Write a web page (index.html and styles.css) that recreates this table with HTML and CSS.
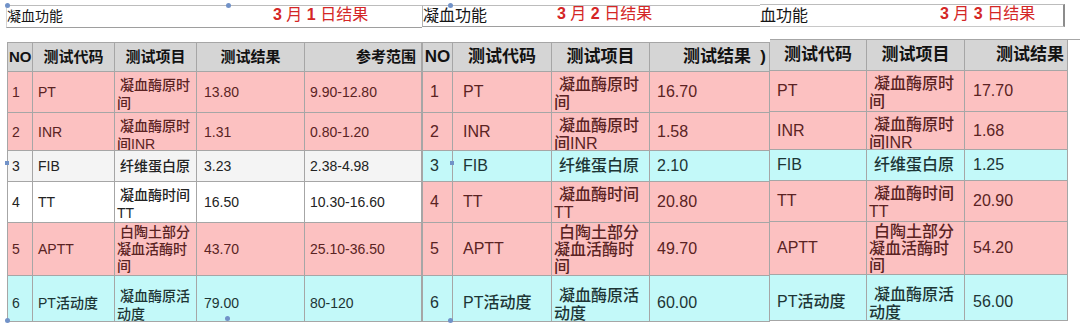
FILE: index.html
```html
<!DOCTYPE html>
<html lang="zh">
<head>
<meta charset="utf-8">
<title>凝血功能</title>
<link rel="stylesheet" href="styles.css">
</head>
<body>
<div class="sheet">
  <section class="panel p1">
    <div class="title"><span class="name">凝血功能</span><span class="date"><b>3</b> 月 <b>1</b> 日结果</span></div>
    <div class="grid">
      <div class="row hd"><div class="c no">NO</div><div class="c cd">测试代码</div><div class="c it">测试项目</div><div class="c rs">测试结果</div><div class="c rg end">参考范围</div></div>
      <div class="row pk r1"><div class="c no">1</div><div class="c cd">PT</div><div class="c it"><span>凝血酶原时<br>间</span></div><div class="c rs">13.80</div><div class="c rg">9.90-12.80</div></div>
      <div class="row pk r2"><div class="c no">2</div><div class="c cd">INR</div><div class="c it"><span>凝血酶原时<br>间INR</span></div><div class="c rs">1.31</div><div class="c rg">0.80-1.20</div></div>
      <div class="row gy r3"><div class="c no">3</div><div class="c cd">FIB</div><div class="c it"><span>纤维蛋白原</span></div><div class="c rs">3.23</div><div class="c rg">2.38-4.98</div></div>
      <div class="row wh r4"><div class="c no">4</div><div class="c cd">TT</div><div class="c it"><span>凝血酶时间<br>TT</span></div><div class="c rs">16.50</div><div class="c rg">10.30-16.60</div></div>
      <div class="row pk r5"><div class="c no">5</div><div class="c cd">APTT</div><div class="c it"><span>白陶土部分<br>凝血活酶时<br>间</span></div><div class="c rs">43.70</div><div class="c rg">25.10-36.50</div></div>
      <div class="row cy r6"><div class="c no">6</div><div class="c cd">PT活动度</div><div class="c it"><span>凝血酶原活<br>动度</span></div><div class="c rs">79.00</div><div class="c rg">80-120</div></div>
    </div>
  </section>

  <section class="panel p2">
    <div class="title"><span class="name">凝血功能</span><span class="date"><b>3</b> 月 <b>2</b> 日结果</span></div>
    <div class="grid">
      <div class="row hd"><div class="c no">NO</div><div class="c cd">测试代码</div><div class="c it">测试项目</div><div class="c rs end">测试结果&nbsp;&nbsp;)</div></div>
      <div class="row pk r1"><div class="c no">1</div><div class="c cd">PT</div><div class="c it"><span>凝血酶原时<br>间</span></div><div class="c rs">16.70</div></div>
      <div class="row pk r2"><div class="c no">2</div><div class="c cd">INR</div><div class="c it"><span>凝血酶原时<br>间INR</span></div><div class="c rs">1.58</div></div>
      <div class="row cy r3"><div class="c no">3</div><div class="c cd">FIB</div><div class="c it"><span>纤维蛋白原</span></div><div class="c rs">2.10</div></div>
      <div class="row pk r4"><div class="c no">4</div><div class="c cd">TT</div><div class="c it"><span>凝血酶时间<br>TT</span></div><div class="c rs">20.80</div></div>
      <div class="row pk r5"><div class="c no">5</div><div class="c cd">APTT</div><div class="c it"><span>白陶土部分<br>凝血活酶时<br>间</span></div><div class="c rs">49.70</div></div>
      <div class="row cy r6"><div class="c no">6</div><div class="c cd">PT活动度</div><div class="c it"><span>凝血酶原活<br>动度</span></div><div class="c rs">60.00</div></div>
    </div>
  </section>

  <section class="panel p3">
    <div class="title"><span class="name">血功能</span><span class="date"><b>3</b> 月 <b>3</b> 日结果</span></div>
    <div class="grid">
      <div class="row hd"><div class="c cd">测试代码</div><div class="c it">测试项目</div><div class="c rs end">测试结果</div></div>
      <div class="row pk r1"><div class="c cd">PT</div><div class="c it"><span>凝血酶原时<br>间</span></div><div class="c rs">17.70</div></div>
      <div class="row pk r2"><div class="c cd">INR</div><div class="c it"><span>凝血酶原时<br>间INR</span></div><div class="c rs">1.68</div></div>
      <div class="row cy r3"><div class="c cd">FIB</div><div class="c it"><span>纤维蛋白原</span></div><div class="c rs">1.25</div></div>
      <div class="row pk r4"><div class="c cd">TT</div><div class="c it"><span>凝血酶时间<br>TT</span></div><div class="c rs">20.90</div></div>
      <div class="row pk r5"><div class="c cd">APTT</div><div class="c it"><span>白陶土部分<br>凝血活酶时<br>间</span></div><div class="c rs">54.20</div></div>
      <div class="row cy r6"><div class="c cd">PT活动度</div><div class="c it"><span>凝血酶原活<br>动度</span></div><div class="c rs">56.00</div></div>
    </div>
  </section>

  <i class="handle h1"></i>
  <i class="handle h2"></i>
  <i class="handle h3"></i>
  <i class="handle h4"></i>
  <i class="handle h5 sq"></i>
  <i class="handle h6"></i>
  <i class="handle h7"></i>
  <i class="handle h8 sq"></i>
</div>
</body>
</html>
```

FILE: styles.css
```css
html, body {
  margin: 0;
  background: #fff;
}

body {
  font-family: "Liberation Sans", "Noto Sans CJK SC", sans-serif;
  color: #222;
}

.sheet {
  position: relative;
  display: flex;
  align-items: flex-start;
  width: 1080px;
  height: 327px;
  overflow: hidden;
  background: #fff;
}

.panel {
  flex: none;
  display: flex;
  flex-direction: column;
}

.p1 {
  width: 415px;
  margin-left: 7px;
  --fs: 14px;
  --hfs: 15px;
  --tfs: 14px;
  --ind: 3px;
  --dm: 210px;
  --pno: 4px;
  --pcd: 5px;
  --prs: 7px;
}

.p2 {
  width: 348px;
  --fs: 16px;
  --hfs: 17px;
  --tfs: 16px;
  --ind: 5px;
  --dm: 70px;
  --pno: 7px;
  --pcd: 10px;
  --prs: 7px;
}

.p3 {
  width: 310px;
  --fs: 16px;
  --hfs: 17px;
  --tfs: 16px;
  --ind: 5px;
  --dm: 132px;
  --pcd: 7px;
  --prs: 8px;
}

/* title bar */
.title {
  box-sizing: border-box;
  height: 23px;
  margin-top: 5px;
  display: flex;
  align-items: flex-end;
  white-space: nowrap;
  overflow: hidden;
  background: #fff;
  border-top: 1px solid #bcbcbc;
  border-bottom: 1px solid #9e9e9e;
}

.p1 .title {
  margin-left: -1px;
  border-left: 1px solid #d4d4d4;
}

.p2 .title {
  width: 338px;
  height: 22px;
  border-left: 1px solid #b4b4b4;
}

.p3 .title {
  width: 305px;
  margin-left: -10px;
  margin-top: 4px;
  border-right: 2px solid #8c8c8c;
  border-bottom-color: #c8c8c8;
}

.name {
  flex: none;
  font-size: var(--tfs);
  line-height: 21px;
  color: #151515;
}

.date {
  flex: none;
  margin-left: var(--dm);
  margin-bottom: 2px;
  font-size: 16px;
  line-height: 20px;
  color: #d42626;
}

.date b {
  font-weight: bold;
}

/* table grid */
.grid {
  display: grid;
  margin-top: 14px;
  border-top: 1px solid #a6a6a6;
  font-size: var(--fs);
  line-height: 18px;
  grid-template-rows: 29px 41px 38px 31px 41px 53px 46px;
}

.p1 .grid {
  grid-template-columns: 25px 82px 82px 108px 117px;
  border-left: 1px solid #a6a6a6;
}

.p2 .grid {
  margin-top: 15px;
  grid-template-columns: 30px 99px 98px 120px;
  border-left: 1px solid #a6a6a6;
}

.p3 .grid {
  margin-top: 12px;
  grid-template-columns: 97px 98px 103px;
  grid-template-rows: 31px 41px 38px 31px 41px 53px 46px;
}

.row {
  display: contents;
}

.c {
  box-sizing: border-box;
  display: flex;
  align-items: center;
  overflow: hidden;
  white-space: nowrap;
  font-weight: 500;
  background: var(--bg);
  color: var(--fg);
  border-right: 1px solid #a6a6a6;
  border-bottom: 1px solid #a6a6a6;
}

.no { padding-left: var(--pno); }
.cd { padding-left: var(--pcd); }
.rs { padding-left: var(--prs); }
.rg { padding-left: 5px; }

.it {
  align-items: flex-start;
  padding-left: 2px;
  padding-top: 4px;
  text-indent: var(--ind);
}

.it span {
  display: block;
}

.r3 .it {
  align-items: center;
  padding-top: 0;
}

.r5 .it {
  padding-top: 1px;
  line-height: 17px;
}

.r6 .c {
  padding-top: 8px;
}

.r6 .it {
  padding-top: 11px;
}

/* row colours */
.hd { --bg: #d5d5d5; --fg: #121212; }
.pk { --bg: #fcc1c1; --fg: #5a2323; }
.cy { --bg: #c3f9f9; --fg: #1d3535; }
.gy { --bg: #f4f4f4; --fg: #232323; }
.wh { --bg: #ffffff; --fg: #232323; }

.hd .c {
  justify-content: center;
  padding: 0;
  text-indent: 0;
  align-items: center;
  font-weight: bold;
  font-size: var(--hfs);
}

.p1 .hd .no {
  justify-content: flex-start;
  padding-left: 1px;
}

.hd .end {
  justify-content: flex-end;
  padding-right: 5px;
}

.p2 .hd .end,
.p3 .hd .end {
  padding-right: 3px;
}

/* selection handles of the pasted pictures */
.handle {
  position: absolute;
  width: 5px;
  height: 5px;
  border-radius: 50%;
  background: #7192c8;
}

.handle.sq {
  width: 4px;
  height: 4px;
  border-radius: 0;
}

.h1 { left: 5px; top: 3px; }
.h2 { left: 226px; top: 3px; }
.h3 { left: 5px; top: 318px; }
.h4 { left: 225px; top: 316px; }
.h5 { left: 5px; top: 161px; }
.h6 { left: 448px; top: 3px; }
.h7 { left: 448px; top: 318px; }
.h8 { left: 450px; top: 161px; }
```
